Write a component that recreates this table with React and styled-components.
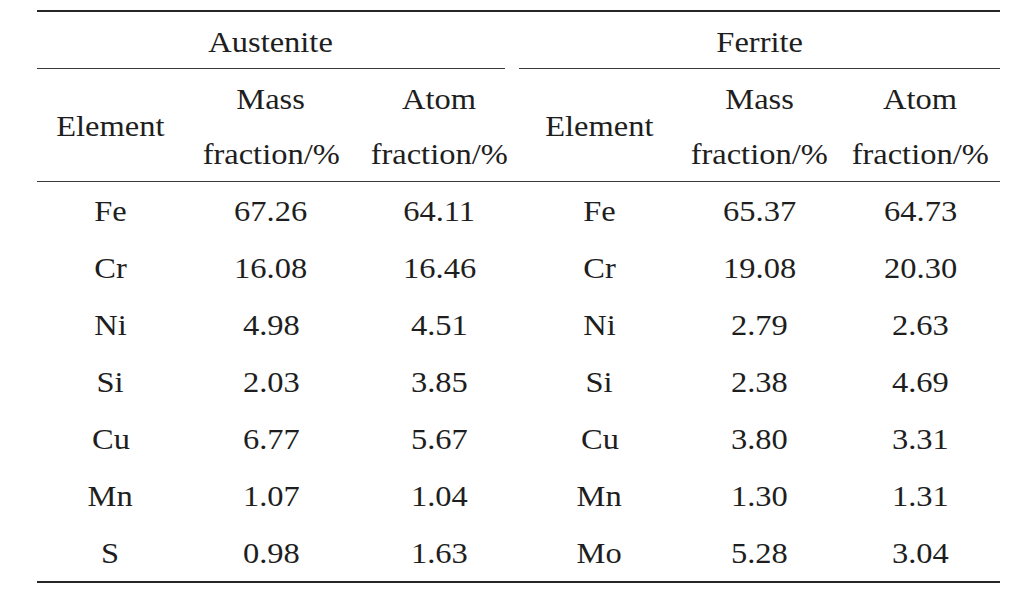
import React from 'react';
import styled, { createGlobalStyle } from 'styled-components';

const Global = createGlobalStyle`
  html, body { margin: 0; padding: 0; background: #ffffff; }
  body {
    font-family: "Liberation Serif", "Times New Roman", serif;
    color: #1e1e1e;
  }
`;

const Page = styled.div`
  padding: 10px 0 0 37px;
`;

const Table = styled.div`
  width: 963px;
  display: grid;
  grid-template-columns: 147px 174px 163px 157px 163px 159px;
  border-top: 2px solid #262626;
  border-bottom: 2px solid #262626;
  font-size: 29px;
`;

const Text = styled.span`
  display: inline-block;
  transform: scaleX(1.12);
  transform-origin: center;
  white-space: nowrap;
`;

const Group = styled.div`
  grid-column: span 3;
  padding-top: 4px;
  height: 52px;
  line-height: 52px;
  text-align: center;
  border-bottom: 1px solid #3a3a3a;
  margin: ${(p) => (p.$side === 'left' ? '0 16px 0 0' : '0 0 0 -2px')};
`;

const HeadCell = styled.div`
  height: 109px;
  padding-top: 3px;
  line-height: 54.5px;
  text-align: center;
  border-bottom: 1px solid #3a3a3a;
  display: flex;
  flex-direction: column;
  align-items: center;
  justify-content: ${(p) => (p.$single ? 'center' : 'flex-start')};
`;

const Cell = styled.div`
  height: 55px;
  padding-top: 2px;
  line-height: 55px;
  text-align: center;
`;

const rows = [
  ['Fe', '67.26', '64.11', 'Fe', '65.37', '64.73'],
  ['Cr', '16.08', '16.46', 'Cr', '19.08', '20.30'],
  ['Ni', '4.98', '4.51', 'Ni', '2.79', '2.63'],
  ['Si', '2.03', '3.85', 'Si', '2.38', '4.69'],
  ['Cu', '6.77', '5.67', 'Cu', '3.80', '3.31'],
  ['Mn', '1.07', '1.04', 'Mn', '1.30', '1.31'],
  ['S', '0.98', '1.63', 'Mo', '5.28', '3.04'],
];

const SubHeads = () =>
  [0, 1].map((g) => (
    <React.Fragment key={g}>
      <HeadCell $single>
        <Text>Element</Text>
      </HeadCell>
      <HeadCell>
        <Text>Mass</Text>
        <Text>fraction/%</Text>
      </HeadCell>
      <HeadCell>
        <Text>Atom</Text>
        <Text>fraction/%</Text>
      </HeadCell>
    </React.Fragment>
  ));

export default function App() {
  return (
    <>
      <Global />
      <Page>
        <Table>
          <Group $side="left">
            <Text>Austenite</Text>
          </Group>
          <Group $side="right">
            <Text>Ferrite</Text>
          </Group>
          <SubHeads />
          {rows.map((r, i) =>
            r.map((v, j) => (
              <Cell key={`${i}-${j}`}>
                <Text>{v}</Text>
              </Cell>
            ))
          )}
        </Table>
      </Page>
    </>
  );
}
